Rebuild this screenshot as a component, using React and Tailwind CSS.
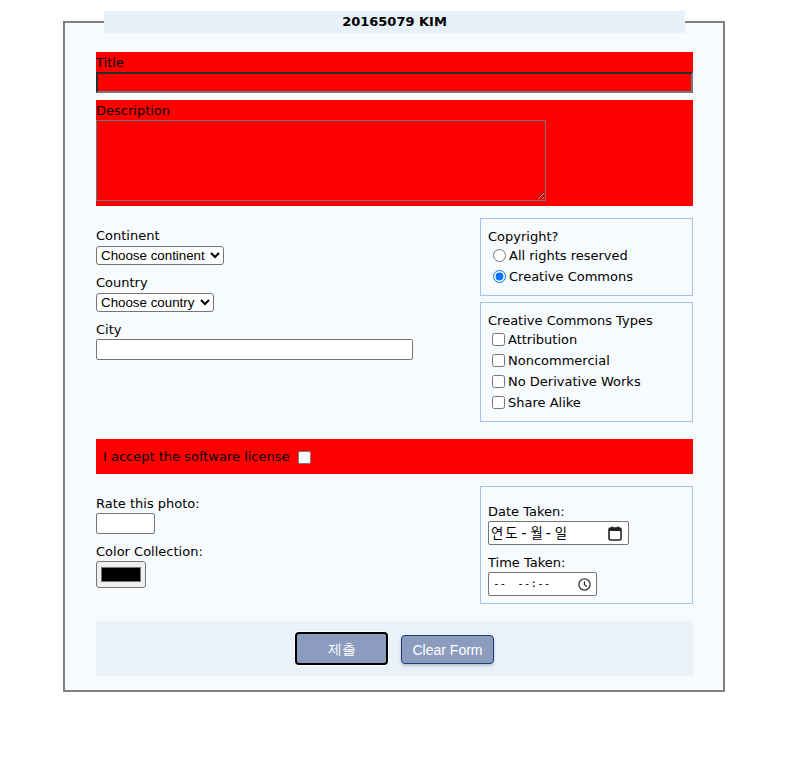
import { useState } from "react";

const boxCls = "border border-[#9ec3ec] px-[7px]";

function CalendarIcon() {
    return (
        <svg width="14" height="15" viewBox="0 0 14 15" className="text-[#222]">
            <rect x="1" y="2" width="12" height="12" rx="1.5" fill="none" stroke="currentColor" strokeWidth="1.6" />
            <rect x="1" y="2" width="12" height="3" fill="currentColor" />
            <rect x="3.5" y="0.5" width="1.6" height="2.5" fill="currentColor" />
            <rect x="8.9" y="0.5" width="1.6" height="2.5" fill="currentColor" />
        </svg>
    );
}

function ClockIcon() {
    return (
        <svg width="13" height="13" viewBox="0 0 13 13" className="text-[#333]">
            <circle cx="6.5" cy="6.5" r="5.6" fill="none" stroke="currentColor" strokeWidth="1.3" />
            <path d="M6.5 3.3 V6.8 L8.8 8.6" fill="none" stroke="currentColor" strokeWidth="1.3" />
        </svg>
    );
}

export default function App() {
    const [copyright, setCopyright] = useState("cc");

    return (
        <div className="min-h-[772px] bg-white pt-[11px] font-['DejaVu_Sans',Verdana,sans-serif] text-[13px] leading-[18px] text-black">
            <fieldset className="ml-[63px] w-[662px] border-2 border-[#808080] bg-[#f8fbfe] pb-[14px] pl-[31px] pr-[30px]">
                <legend className="mx-auto h-[22px] w-[581px] bg-[#e8f1f9] text-center font-bold leading-[22px]">
                    20165079 KIM
                </legend>

                <div className="pt-[19px]">
                    {/* Title */}
                    <div className="bg-[#ff0000]">
                        <label className="block pt-[1px] leading-[19px]">Title</label>
                        <input
                            type="text"
                            className="block h-[21px] w-full border-2 border-t-[#2b2b2b] border-l-[#2b2b2b] border-b-[#777] border-r-[#777] bg-[#ff0000]"
                        />
                    </div>

                    {/* Description */}
                    <div className="mt-[7px] bg-[#ff0000] pb-[5px]">
                        <label className="block pt-[1px] leading-[19px]">Description</label>
                        <textarea className="block h-[81px] w-[450px] border border-[#767676] bg-[#ff0000]" />
                    </div>

                    {/* Location + copyright */}
                    <div className="mt-[12px] flex items-start justify-between">
                        <div className="mt-[9px] flex w-[317px] flex-col">
                            <label>Continent</label>
                            <select className="mt-[1px] h-[19px] w-[128px] rounded-[3px] border border-[#767676] bg-white font-['Liberation_Sans',Arial,sans-serif] text-[13.33px] leading-[15px]">
                                <option>Choose continent</option>
                            </select>
                            <label className="mt-[9px]">Country</label>
                            <select className="mt-[1px] h-[19px] w-[118px] rounded-[3px] border border-[#767676] bg-white font-['Liberation_Sans',Arial,sans-serif] text-[13.33px] leading-[15px]">
                                <option>Choose country</option>
                            </select>
                            <label className="mt-[9px]">City</label>
                            <input
                                type="text"
                                className="h-[21px] w-[317px] rounded-[2px] border border-[#767676] bg-white"
                            />
                        </div>

                        <div className="flex w-[213px] flex-col gap-[6px]">
                            <div className={`${boxCls} pb-[8px] pt-[9px]`}>
                                <div className="leading-[17px]">Copyright?</div>
                                <label className="flex h-[21px] items-center">
                                    <input
                                        type="radio"
                                        name="copyright"
                                        className="ml-[5px] mr-[3px]"
                                        checked={copyright === "all"}
                                        onChange={() => setCopyright("all")}
                                    />
                                    All rights reserved
                                </label>
                                <label className="flex h-[21px] items-center">
                                    <input
                                        type="radio"
                                        name="copyright"
                                        className="ml-[5px] mr-[3px]"
                                        checked={copyright === "cc"}
                                        onChange={() => setCopyright("cc")}
                                    />
                                    Creative Commons
                                </label>
                            </div>
                            <div className={`${boxCls} pb-[8px] pt-[9px]`}>
                                <div className="leading-[17px]">Creative Commons Types</div>
                                {["Attribution", "Noncommercial", "No Derivative Works", "Share Alike"].map((t) => (
                                    <label key={t} className="flex h-[21px] items-center">
                                        <input type="checkbox" className="ml-[4px] mr-[3px]" />
                                        {t}
                                    </label>
                                ))}
                            </div>
                        </div>
                    </div>

                    {/* License */}
                    <div className="mt-[17px] flex h-[35px] items-center bg-[#ff0000] px-[7px] pt-[1px]">
                        <label className="flex items-center">
                            I accept the software license
                            <input type="checkbox" className="ml-[8px]" />
                        </label>
                    </div>

                    {/* Rating + dates */}
                    <div className="mt-[12px] flex items-start justify-between">
                        <div className="mt-[9px] flex flex-col items-start">
                            <label>Rate this photo:</label>
                            <input
                                type="text"
                                className="h-[21px] w-[59px] rounded-[2px] border border-[#767676] bg-white"
                            />
                            <label className="mt-[9px]">Color Collection:</label>
                            <input
                                type="color"
                                defaultValue="#000000"
                                className="h-[27px] w-[50px] rounded-[3px] border border-[#767676] bg-[#efefef] px-[2px] py-[1px]"
                            />
                        </div>

                        <div className={`${boxCls} w-[213px] pb-[7px] pt-[16px]`}>
                            <label className="block leading-[17px]">Date Taken:</label>
                            <div className="mt-[1px] flex h-[24px] w-[141px] items-center justify-between rounded-[2px] border border-[#767676] bg-white pl-[2px] pr-[6px] font-['Noto_Sans_CJK_KR',sans-serif] text-[13.33px]">
                                <span className="flex items-center">
                                    <span className="tracking-[2px]">연도</span>
                                    <span className="font-['DejaVu_Sans_Mono',monospace] text-[15px]">-</span>
                                    <span className="ml-[2px]">월</span>
                                    <span className="ml-[1px] font-['DejaVu_Sans_Mono',monospace] text-[15px]">-</span>
                                    <span className="ml-[2px]">일</span>
                                </span>
                                <CalendarIcon />
                            </div>
                            <label className="mt-[9px] block leading-[17px]">Time Taken:</label>
                            <div className="mt-[1px] flex h-[24px] w-[109px] items-center justify-between rounded-[2px] border border-[#767676] bg-white pl-[4px] pr-[5px] font-['DejaVu_Sans_Mono',monospace] text-[11px]">
                                <span className="flex">
                                    <span>--</span>
                                    <span className="ml-[11px]">--</span>
                                    <span>:</span>
                                    <span>--</span>
                                </span>
                                <ClockIcon />
                            </div>
                        </div>
                    </div>

                    {/* Buttons */}
                    <div className="mt-[17px] flex h-[55px] items-center justify-center gap-[13px] bg-[#eaf2f9] font-['Liberation_Sans',Arial,sans-serif] text-[14px] text-white">
                        <button
                            type="submit"
                            className="h-[33px] w-[93px] rounded-[4px] border-2 border-black bg-[#8c9cbe] shadow-[0_0_0_1px_#fff]"
                        >
                            제출
                        </button>
                        <button
                            type="reset"
                            className="mt-[2px] h-[29px] w-[93px] rounded-[4px] border border-[#1c3b7c] bg-[#8c9cbe] shadow-[0_2px_3px_rgba(0,0,0,0.2)]"
                        >
                            Clear Form
                        </button>
                    </div>
                </div>
            </fieldset>
        </div>
    );
}
